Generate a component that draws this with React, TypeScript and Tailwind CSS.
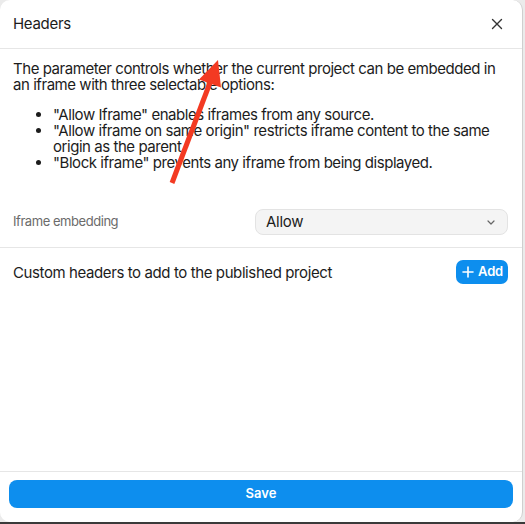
import React from 'react';

function CloseIcon() {
    return (
        <svg width="12" height="12" viewBox="0 0 12 12" fill="none" stroke="#333" strokeWidth="1.4" strokeLinecap="round">
            <path d="M1.5 1.5l9 9M10.5 1.5l-9 9" />
        </svg>
    );
}

function Chevron() {
    return (
        <svg width="8" height="5" viewBox="0 0 8 5" fill="none" stroke="#666" strokeWidth="1.2" strokeLinecap="round" strokeLinejoin="round">
            <path d="M1 1l3 3 3-3" />
        </svg>
    );
}

function PlusIcon() {
    return (
        <svg width="12" height="12" viewBox="0 0 12 12" fill="none" stroke="#fff" strokeWidth="1.6" strokeLinecap="round">
            <path d="M6 1v10M1 6h10" />
        </svg>
    );
}

export default function App() {
    return (
        <div className="relative w-[525px] h-[524px] bg-[#ebebeb] font-['Inter','Liberation_Sans',sans-serif] text-[#1c1c1c]">
            <div className="w-[523px] h-[522px] bg-white rounded-[10px] border-r border-[#cfcfcf] flex flex-col overflow-hidden">
                {/* Title */}
                <div className="h-[49px] flex items-center justify-between pl-[13px] pr-[19px] border-b border-[#e6e6e6] shrink-0">
                    <span className="text-[15px] tracking-[-0.3px]">Headers</span>
                    <CloseIcon />
                </div>

                {/* Description */}
                <div className="px-[13px] pt-[12px] text-[15px] leading-[16px] tracking-[-0.45px]">
                    <p>The parameter controls whether the current project can be embedded in an iframe with three selectable options:</p>
                    <ul className="list-disc pl-[40px] mt-[14px]">
                        <li>"Allow Iframe" enables iframes from any source.</li>
                        <li>"Allow iframe on same origin" restricts iframe content to the same origin as the parent</li>
                        <li>"Block iframe" prevents any iframe from being displayed.</li>
                    </ul>
                </div>

                {/* Iframe embedding */}
                <div className="flex items-center justify-between pl-[13px] pr-[14px] mt-[38px] pb-[12px] border-b border-[#e6e6e6]">
                    <span className="text-[13px] tracking-[-0.45px] text-[#6b6b6b]">Iframe embedding</span>
                    <div className="w-[253px] h-[26px] rounded-[8px] bg-[#f4f4f4] border border-[#e3e3e3] flex items-center justify-between pl-[10px] pr-[12px]">
                        <span className="text-[15px] tracking-[-0.3px]">Allow</span>
                        <Chevron />
                    </div>
                </div>

                {/* Custom headers */}
                <div className="flex justify-between pl-[13px] pr-[14px] pt-[12px] flex-1 items-start">
                    <span className="text-[15px] tracking-[-0.4px] mt-[2px]">Custom headers to add to the published project</span>
                    <button className="h-[24px] pl-[6px] pr-[5px] rounded-[7px] bg-[#0d8eee] text-white text-[13px] font-semibold tracking-[-0.2px] flex items-center gap-[4px]">
                        <PlusIcon />
                        Add
                    </button>
                </div>

                {/* Footer */}
                <div className="border-t border-[#e6e6e6] px-[9px] pt-[8px] pb-[14px] shrink-0">
                    <button className="w-full h-[28px] rounded-[8px] bg-[#0d8eee] text-white text-[13px] font-semibold">
                        Save
                    </button>
                </div>
            </div>
            <div className="h-[2px] bg-[#3a3a3a]" />

            {/* Annotation arrow */}
            <svg className="absolute inset-0 pointer-events-none" width="525" height="524">
                <line x1="172" y1="183" x2="211" y2="80" stroke="#f33a22" strokeWidth="5" />
                <polygon points="218,60 199,79.5 221,87.5" fill="#f33a22" />
            </svg>
        </div>
    );
}
